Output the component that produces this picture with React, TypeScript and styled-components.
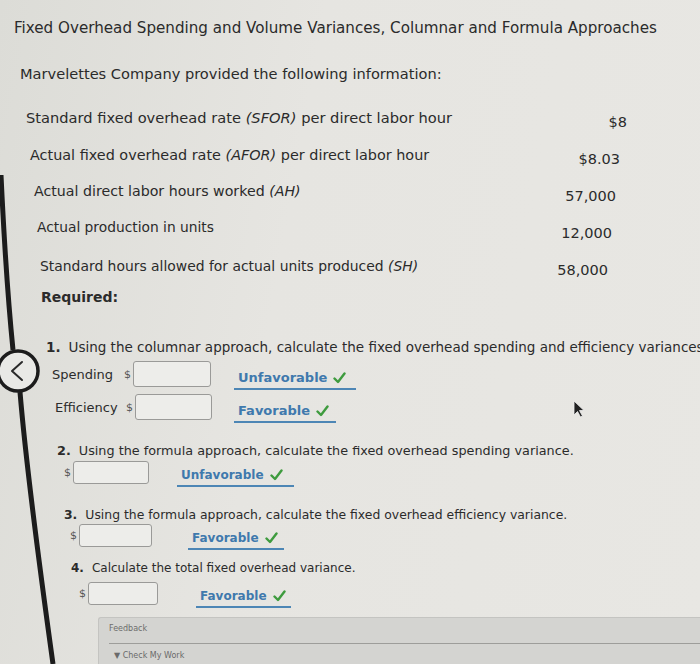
import React from 'react';
import styled, {createGlobalStyle} from 'styled-components';

const GlobalStyle = createGlobalStyle`
  html, body {
    margin: 0;
    padding: 0;
    background: #e3e2dd;
  }
  body {
    font-family: "DejaVu Sans", Verdana, sans-serif;
    color: #2b2b2b;
  }
`;

const Page = styled.div`
  position: relative;
  width: 700px;
  height: 664px;
  overflow: hidden;
  padding-top: 18px;
  box-sizing: border-box;
  background: linear-gradient(100deg, #dcdcd7 0%, #e6e5e1 40%, #e8e7e3 100%);
`;

type LineProps = { $indent: number; $gap: number; $size: number; $bold?: boolean };

const Line = styled.div<LineProps>`
  height: 20px;
  display: flex;
  align-items: center;
  margin-top: ${p => p.$gap}px;
  padding-left: ${p => p.$indent}px;
  font-size: ${p => p.$size}px;
  font-weight: ${p => (p.$bold ? 'bold' : 'normal')};
  white-space: nowrap;
  overflow: hidden;
`;

type DataRowProps = { $indent: number; $right: number; $gap: number; $size: number };

const DataRow = styled.div<DataRowProps>`
  height: 20px;
  display: flex;
  justify-content: space-between;
  align-items: center;
  margin-top: ${p => p.$gap}px;
  padding-left: ${p => p.$indent}px;
  padding-right: ${p => 700 - p.$right}px;
  font-size: ${p => p.$size}px;
  white-space: nowrap;
`;

const Value = styled.span<{ $drop: number }>`
  position: relative;
  top: ${p => p.$drop}px;
  font-size: 14.5px;
`;

const Num = styled.span`
  font-weight: bold;
  margin-right: 8px;
`;

type AnswerProps = { $indent: number; $gap: number; $height: number; $size: number };

const AnswerRow = styled.div<AnswerProps>`
  height: ${p => p.$height}px;
  display: flex;
  align-items: center;
  margin-top: ${p => p.$gap}px;
  padding-left: ${p => p.$indent}px;
  font-size: ${p => p.$size}px;
`;

const Label = styled.span<{ $width: number }>`
  width: ${p => p.$width}px;
`;

const Dollar = styled.span`
  font-size: 11px;
  color: #555;
  margin-right: 2px;
`;

const Box = styled.div<{ $width: number }>`
  width: ${p => p.$width}px;
  height: 100%;
  box-sizing: border-box;
  border: 1.5px solid #9a9a98;
  border-radius: 3px;
  background: #ededea;
`;

const Select = styled.div<{ $offset: number; $width: number; $size: number }>`
  display: inline-flex;
  align-items: center;
  gap: 6px;
  margin-left: ${p => p.$offset}px;
  width: ${p => p.$width}px;
  box-sizing: border-box;
  padding: 6px 0 3px 4px;
  border-bottom: 2px solid #4d86b5;
  color: #3f79ad;
  font-weight: bold;
  font-size: ${p => p.$size}px;
  align-self: flex-end;
  margin-bottom: -3px;
`;

const Check = () => (
  <svg width="13" height="12" viewBox="0 0 13 12">
    <path d="M1.5 6.5 L5 10 L11.5 1.5" fill="none" stroke="#3e9b3e" strokeWidth="2.4" strokeLinecap="round" strokeLinejoin="round"/>
  </svg>
);

const FeedbackPanel = styled.div`
  margin-top: 12px;
  margin-left: 98px;
  height: 60px;
  background: #d4d4d1;
  border-top: 1px solid #c4c4c1;
  border-left: 1px solid #c4c4c1;
  border-radius: 3px 0 0 0;
  padding: 6px 0 0 10px;
  font-size: 8px;
  color: #6d6d6b;
`;

const FeedbackTitle = styled.div`
  height: 14px;
`;

const Rule = styled.div`
  margin: 5px 0 0 0;
  border-top: 1px solid #9d9d9a;
`;

const CheckWork = styled.div`
  margin-top: 7px;
  padding-left: 5px;
  color: #6a6a6a;
`;

const Edge = styled.svg`
  position: absolute;
  left: 0;
  top: 0;
  pointer-events: none;
`;

const Cursor = styled.svg`
  position: absolute;
  left: 572px;
  top: 400px;
`;

type Answer = {
  label?: string;
  indent: number;
  gap: number;
  height: number;
  size: number;
  labelWidth: number;
  box: number;
  offset: number;
  selWidth: number;
  selSize: number;
  choice: string;
};

const columnar: Answer[] = [
  {label: 'Spending', indent: 52, gap: 4, height: 26, size: 13, labelWidth: 72, box: 78, offset: 23, selWidth: 122, selSize: 13, choice: 'Unfavorable'},
  {label: 'Efficiency', indent: 55, gap: 7, height: 26, size: 13, labelWidth: 71, box: 77, offset: 22, selWidth: 102, selSize: 13, choice: 'Favorable'},
];

const spendingFormula: Answer = {indent: 64, gap: 1, height: 23, size: 12, labelWidth: 0, box: 76, offset: 28, selWidth: 117, selSize: 12, choice: 'Unfavorable'};
const efficiencyFormula: Answer = {indent: 70, gap: 0, height: 23, size: 12, labelWidth: 0, box: 73, offset: 36, selWidth: 96, selSize: 12, choice: 'Favorable'};
const total: Answer = {indent: 79, gap: 4, height: 23, size: 12, labelWidth: 0, box: 70, offset: 38, selWidth: 95, selSize: 12, choice: 'Favorable'};

const AnswerLine: React.FC<{a: Answer}> = ({a}) => (
  <AnswerRow $indent={a.indent} $gap={a.gap} $height={a.height} $size={a.size}>
    {a.label && <Label $width={a.labelWidth}>{a.label}</Label>}
    <Dollar>$</Dollar>
    <Box $width={a.box}/>
    <Select $offset={a.offset} $width={a.selWidth} $size={a.selSize}>
      {a.choice} <Check/>
    </Select>
  </AnswerRow>
);

export default function App() {
  return (
    <Page>
      <GlobalStyle/>
      <Line $indent={14} $gap={0} $size={15.15}>
        Fixed Overhead Spending and Volume Variances, Columnar and Formula Approaches
      </Line>
      <Line $indent={20} $gap={25} $size={14.6}>Marvelettes Company provided the following information:</Line>

      <DataRow $indent={26} $right={627} $gap={24} $size={14.65}>
        <span>Standard fixed overhead rate <i>(SFOR)</i> per direct labor hour</span>
        <Value $drop={5}>$8</Value>
      </DataRow>
      <DataRow $indent={30} $right={620} $gap={18} $size={14.4}>
        <span>Actual fixed overhead rate <i>(AFOR)</i> per direct labor hour</span>
        <Value $drop={4}>$8.03</Value>
      </DataRow>
      <DataRow $indent={34} $right={616} $gap={16} $size={14.2}>
        <span>Actual direct labor hours worked <i>(AH)</i></span>
        <Value $drop={5}>57,000</Value>
      </DataRow>
      <DataRow $indent={37} $right={612} $gap={16} $size={13.8}>
        <span>Actual production in units</span>
        <Value $drop={6}>12,000</Value>
      </DataRow>
      <DataRow $indent={40} $right={608} $gap={19} $size={13.9}>
        <span>Standard hours allowed for actual units produced <i>(SH)</i></span>
        <Value $drop={4}>58,000</Value>
      </DataRow>

      <Line $indent={41} $gap={11} $size={14} $bold>Required:</Line>

      <Line $indent={46} $gap={30} $size={13.5}>
        <Num>1.</Num>Using the columnar approach, calculate the fixed overhead spending and efficiency variances.
      </Line>
      {columnar.map(a => <AnswerLine key={a.label} a={a}/>)}

      <Line $indent={57} $gap={20} $size={12.8}>
        <Num>2.</Num>Using the formula approach, calculate the fixed overhead spending variance.
      </Line>
      <AnswerLine a={spendingFormula}/>

      <Line $indent={64} $gap={20} $size={12.4}>
        <Num>3.</Num>Using the formula approach, calculate the fixed overhead efficiency variance.
      </Line>
      <AnswerLine a={efficiencyFormula}/>

      <Line $indent={71} $gap={11} $size={12}>
        <Num>4.</Num>Calculate the total fixed overhead variance.
      </Line>
      <AnswerLine a={total}/>

      <FeedbackPanel>
        <FeedbackTitle>Feedback</FeedbackTitle>
        <Rule/>
        <CheckWork>▼ Check My Work</CheckWork>
      </FeedbackPanel>

      <Edge width="80" height="664" viewBox="0 0 80 664">
        <path d="M1 175 C 5 260, 10 320, 13 350 M 20 392 C 24 440, 33 520, 53 664" fill="none" stroke="#1c1c1c" strokeWidth="5"/>
        <circle cx="18" cy="371" r="20" fill="#e9e9e6" stroke="#1c1c1c" strokeWidth="3.5"/>
        <path d="M22 362 L12 371 L22 380" fill="none" stroke="#2a2a2a" strokeWidth="2" strokeLinecap="round" strokeLinejoin="round"/>
      </Edge>
      <Cursor width="14" height="18" viewBox="0 0 14 18">
        <path d="M2 1 L2 15 L5.5 11.5 L8.5 17 L10.5 16 L7.5 10.5 L12 10.5 Z" fill="#222" stroke="#f0f0f0" strokeWidth="0.8"/>
      </Cursor>
    </Page>
  );
}
